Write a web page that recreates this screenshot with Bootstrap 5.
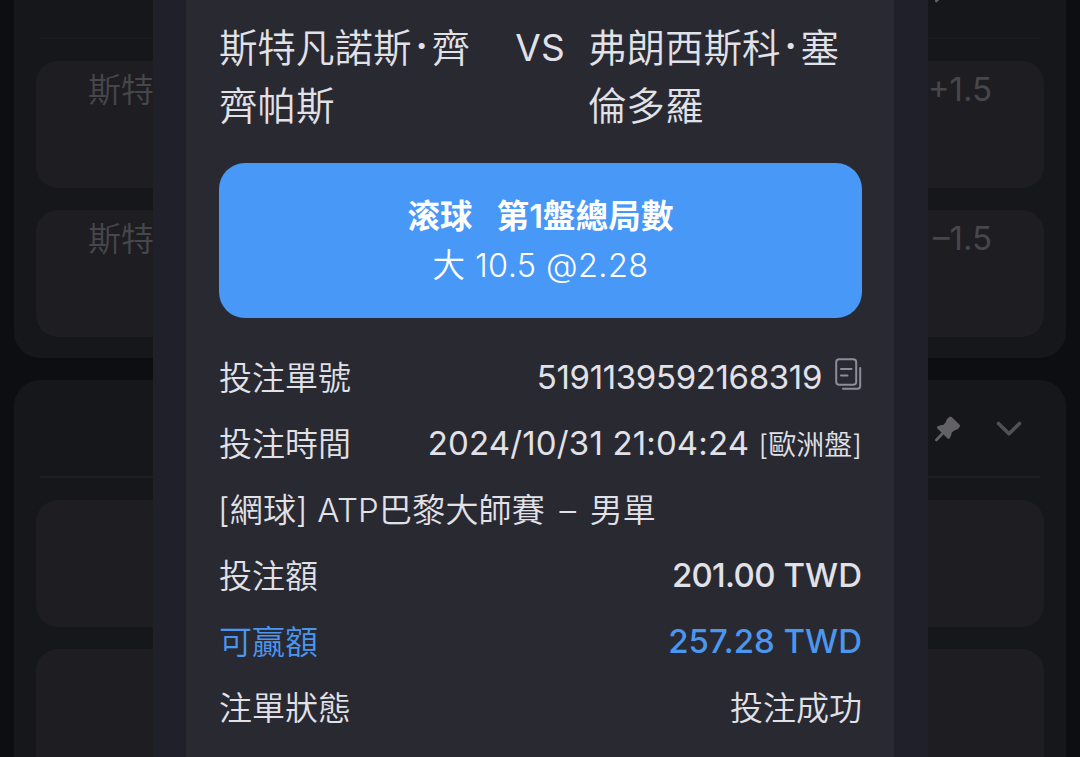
<!DOCTYPE html>
<html lang="zh-Hant">
<head>
  <meta charset="UTF-8" />
  <meta name="viewport" content="width=device-width, initial-scale=1" />
  <title>投注單</title>
  <link href="https://cdn.jsdelivr.net/npm/bootstrap@5.3.2/dist/css/bootstrap.min.css" rel="stylesheet">
  <style>
    body {
      font-family: 'Inter', 'Noto Sans CJK TC', sans-serif;
      background: #0d0e11;
      color: #e1e1e8;
      height: 757px;
      overflow: hidden;
    }
    .cjk {
      font-family: 'Noto Sans CJK TC', sans-serif;
      font-weight: 350;
    }
    .market-list {
      height: 757px;
      padding: 0 14px;
      gap: 22px;
      overflow: hidden;
    }
    .market {
      background: #16171a;
      border-radius: 26px;
      padding: 0 22px;
    }
    .market-first {
      height: 358px;
      flex-shrink: 0;
      border-radius: 0 0 26px 26px;
    }
    .market-last {
      height: 377px;
      border-radius: 26px 26px 0 0;
    }
    .market-head {
      height: 98px;
      margin: 0 4px 22px;
      padding-right: 18px;
      border-bottom: 2px solid #1e1f23;
      gap: 34px;
    }
    .market-first .market-head {
      margin-top: -59.500px;
      border-color: #1a1b1f;
    }
    .market-head svg {
      margin-top: 2px;
    }
    .odds {
      height: 127px;
      padding: 8px 52px 0 52px;
      background: #1e1d21;
      border-radius: 22px;
      color: #47474b;
      font-size: 33px;
      line-height: 41px;
    }
    .odds .cjk {
      line-height: 38px;
    }
    .odds + .odds {
      margin-top: 22px;
    }
    .odds-cut {
      height: 108px;
      border-radius: 22px 22px 0 0;
    }
    .slip-shell {
      position: absolute;
      inset: 0 152px 0 153px;
      background: #20202a;
      padding: 0 34px 0 33px;
    }
    .slip {
      background: #292932;
      padding: 16px 32px 0 33px;
    }
    .teams {
      font-size: 38.5px;
      line-height: 58px;
      margin-bottom: 31px;
    }
    .team {
      width: 273px;
    }
    .team-dot {
      width: 20px;
      font-family: 'Inter', sans-serif;
      font-weight: 600;
      text-align: center;
    }
    .versus {
      width: 96px;
      font-size: 37px;
      padding-top: 3px;
    }
    .pick {
      height: 155px;
      margin-bottom: 27px;
      border-radius: 26px;
      background: #4898f7;
      color: #fff;
      font-size: 32.5px;
      line-height: 49px;
    }
    .pick-name {
      font-weight: 600;
      letter-spacing: .1px;
    }
    .pick-odds {
      font-weight: 350;
      letter-spacing: .4px;
    }
    .bet-row {
      height: 66px;
      font-size: 33px;
    }
    .bet-row > .cjk {
      line-height: 46px;
      padding-bottom: 5px;
    }
    .bet-id {
      letter-spacing: -.35px;
      margin-right: 13px;
    }
    .copy-icon {
      margin-bottom: 8px;
    }
    .bet-time {
      letter-spacing: .15px;
    }
    .odds-type {
      font-size: 28px;
      font-weight: 350;
    }
    .league {
      font-weight: 350;
      letter-spacing: .2px;
      padding-top: 1px;
      margin-left: -1px;
    }
    .league-dash {
      margin: 0 4px 0 5px;
    }
    .stake {
      letter-spacing: -.7px;
    }
    .win {
      color: #4b96ee;
    }
  </style>
</head>
<body>

<svg class="d-none">
  <symbol id="pin" viewBox="0 0 28 28">
    <path d="M15 2.2Q16.200 1 17.600 2L25.600 9.800Q26.600 11 25.400 12.300L23.600 14.300Q20 15 17.600 17.800Q17.500 20.500 16 23Q14.800 24.500 13.300 23.200L3.200 13.300Q2.200 12 3.600 11.200Q7 10 9.600 9.700Q12.300 7.500 12.800 4.300Z" fill="#626266"/>
    <path d="M8.500 18.500L2.300 25" stroke="#626266" stroke-width="2.600" stroke-linecap="round"/>
  </symbol>
  <symbol id="chevron" viewBox="0 0 26 16">
    <path d="M2.500 2.500L13 12.800L23.500 2.500" fill="none" stroke="#515155" stroke-width="3.600" stroke-linecap="round" stroke-linejoin="round"/>
  </symbol>
</svg>

<!-- Market list behind the slip -->
<div class="market-list d-flex flex-column">
  <div class="market market-first">
    <div class="market-head d-flex justify-content-end align-items-center">
      <svg width="28" height="28"><use href="#pin"/></svg>
      <svg width="26" height="16"><use href="#chevron"/></svg>
    </div>
    <div class="odds d-flex justify-content-between"><span class="cjk">斯特</span><span>+1.5</span></div>
    <div class="odds d-flex justify-content-between"><span class="cjk">斯特</span><span>–1.5</span></div>
  </div>
  <div class="market market-last">
    <div class="market-head d-flex justify-content-end align-items-center">
      <svg width="28" height="28"><use href="#pin"/></svg>
      <svg width="26" height="16"><use href="#chevron"/></svg>
    </div>
    <div class="odds"></div>
    <div class="odds odds-cut"></div>
  </div>
</div>

<!-- Bet slip -->
<div class="slip-shell">
  <div class="slip h-100">
    <div class="teams d-flex">
      <div class="team cjk">
        <div class="d-flex"><span>斯特凡諾斯</span><span class="team-dot">·</span><span>齊</span></div>
        <div>齊帕斯</div>
      </div>
      <div class="versus text-center">VS</div>
      <div class="team cjk">
        <div class="d-flex"><span>弗朗西斯科</span><span class="team-dot">·</span><span>塞</span></div>
        <div>倫多羅</div>
      </div>
    </div>

    <div class="pick d-flex flex-column justify-content-center text-center">
      <div class="pick-name"><span class="me-4">滚球</span><span>第1盤總局數</span></div>
      <div class="pick-odds">大 10.5 @2.28</div>
    </div>

    <div class="bet-row d-flex justify-content-between align-items-center">
      <span class="cjk">投注單號</span>
      <span class="d-flex align-items-center">
        <span class="bet-id">5191139592168319</span>
        <svg class="copy-icon" width="27" height="32" viewBox="0 0 27 32">
          <g fill="none" stroke="#8d8d97" stroke-width="2" stroke-linecap="round" stroke-linejoin="round">
            <rect x="1.200" y="1.200" width="20" height="25.500" rx="3"/>
            <path d="M6 11H16.500M6 17.500H12.500M25.200 10V28Q25.200 30.700 22.500 30.700H8"/>
          </g>
        </svg>
      </span>
    </div>
    <div class="bet-row d-flex justify-content-between align-items-center">
      <span class="cjk">投注時間</span>
      <span><span class="bet-time">2024/10/31 21:04:24</span> <span class="odds-type">[歐洲盤]</span></span>
    </div>
    <div class="bet-row d-flex align-items-center">
      <span class="league">[網球] ATP巴黎大師賽 <span class="league-dash">–</span> 男單</span>
    </div>
    <div class="bet-row d-flex justify-content-between align-items-center">
      <span class="cjk">投注額</span>
      <span class="fw-medium"><span class="stake">201.00</span> TWD</span>
    </div>
    <div class="bet-row win d-flex justify-content-between align-items-center">
      <span class="cjk">可贏額</span>
      <span class="fw-medium">257.28 TWD</span>
    </div>
    <div class="bet-row d-flex justify-content-between align-items-center">
      <span class="cjk">注單狀態</span>
      <span class="cjk">投注成功</span>
    </div>
  </div>
</div>

<script src="https://cdn.jsdelivr.net/npm/bootstrap@5.3.2/dist/js/bootstrap.bundle.min.js"></script>
</body>
</html>
